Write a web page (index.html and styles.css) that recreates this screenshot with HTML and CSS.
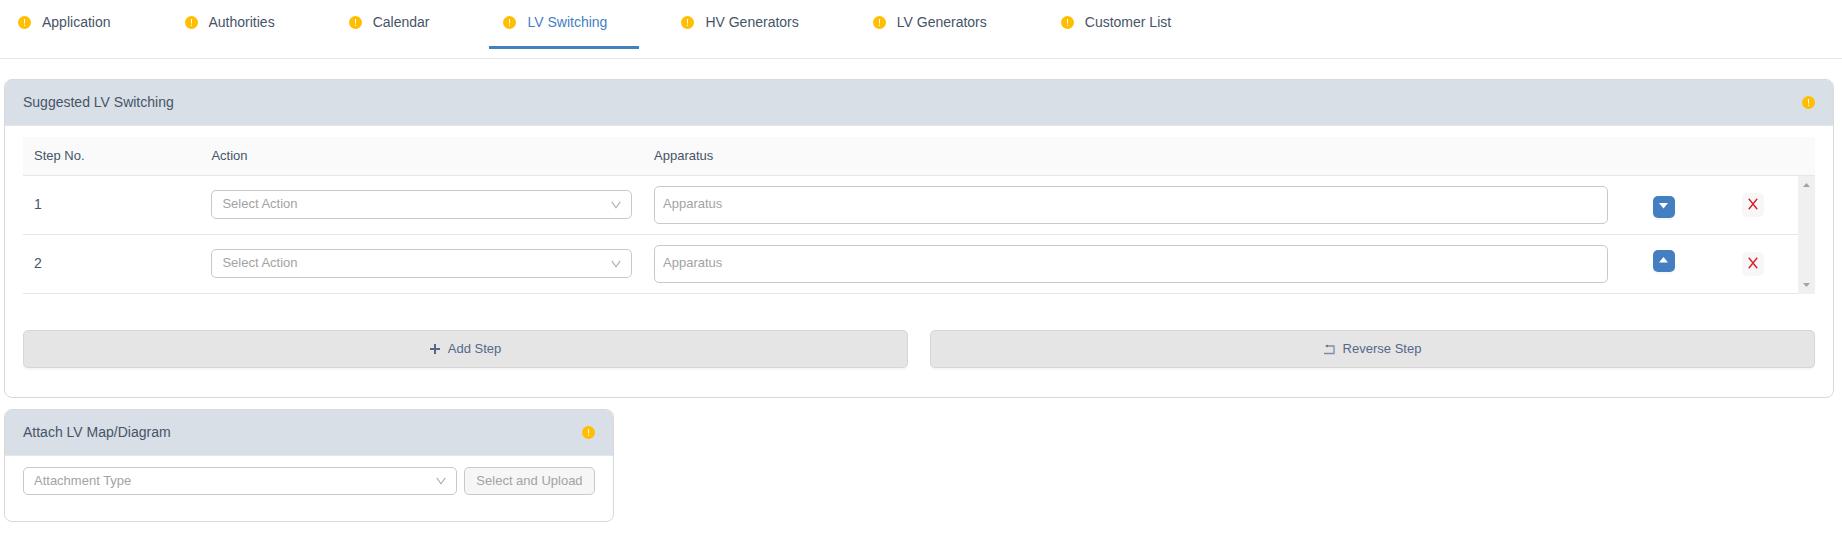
FILE: index.html
```html
<!DOCTYPE html>
<html lang="en">
<head>
<meta charset="utf-8">
<title>LV Switching</title>
<link rel="stylesheet" href="styles.css">
</head>
<body>
<svg class="defs" aria-hidden="true">
  <symbol id="warn" viewBox="0 0 13 13"><circle cx="6.5" cy="6.5" r="6.5" fill="#ffbf00"/><path d="M6 3h1v4.6H6zM6 8.7h1v1.3H6z" fill="#fff"/></symbol>
  <symbol id="chevron" viewBox="0 0 10 8"><path d="M.8.8 5 6.8 9.2.8" fill="none" stroke="#b0b0b0" stroke-width="1.2"/></symbol>
  <symbol id="cross" viewBox="0 0 10 12"><path d="M.8.8 9.2 11.2M9.2.8.8 11.2" fill="none" stroke="#d9202f" stroke-width="1.4"/></symbol>
</svg>
<nav class="tabs">
  <a class="tab" href="#"><svg class="warn"><use href="#warn"/></svg>Application</a>
  <a class="tab" href="#"><svg class="warn"><use href="#warn"/></svg>Authorities</a>
  <a class="tab" href="#"><svg class="warn"><use href="#warn"/></svg>Calendar</a>
  <a class="tab tab-active" href="#" aria-current="page"><svg class="warn"><use href="#warn"/></svg>LV Switching</a>
  <a class="tab" href="#"><svg class="warn"><use href="#warn"/></svg>HV Generators</a>
  <a class="tab" href="#"><svg class="warn"><use href="#warn"/></svg>LV Generators</a>
  <a class="tab" href="#"><svg class="warn"><use href="#warn"/></svg>Customer List</a>
</nav>
<main class="content">
  <section class="card">
    <header class="card-head"><h2 class="card-title">Suggested LV Switching</h2><svg class="warn"><use href="#warn"/></svg></header>
    <div class="card-body">
      <table class="steps">
        <colgroup><col class="col-step"><col class="col-action"><col><col class="col-button"><col class="col-button"><col class="col-scroll"></colgroup>
        <thead>
          <tr><th scope="col">Step No.</th><th scope="col">Action</th><th scope="col">Apparatus</th><th></th><th></th><th></th></tr>
        </thead>
        <tbody>
          <tr>
            <td class="step-no">1</td>
            <td><div class="select-box"><select class="select" aria-label="Action for step 1"><option>Select Action</option></select><svg class="chevron"><use href="#chevron"/></svg></div></td>
            <td><textarea class="textarea" rows="1" placeholder="Apparatus" aria-label="Apparatus for step 1"></textarea></td>
            <td class="center"><button class="move move-down" type="button" aria-label="Move step 1 down"><svg width="9" height="6" viewBox="0 0 9 6"><path d="M0 0h9L4.500 5.500z" fill="#fff"/></svg></button></td>
            <td class="center"><button class="remove" type="button" aria-label="Remove step 1"><svg width="10" height="12"><use href="#cross"/></svg></button></td>
            <td class="scroll-cell" rowspan="2"><div class="scrollbar"><svg width="7" height="4"><path d="M0 4h7L3.500 0z" fill="#a3a3a3"/></svg><svg width="7" height="4"><path d="M0 0h7L3.500 4z" fill="#a3a3a3"/></svg></div></td>
          </tr>
          <tr>
            <td class="step-no">2</td>
            <td><div class="select-box"><select class="select" aria-label="Action for step 2"><option>Select Action</option></select><svg class="chevron"><use href="#chevron"/></svg></div></td>
            <td><textarea class="textarea" rows="1" placeholder="Apparatus" aria-label="Apparatus for step 2"></textarea></td>
            <td class="center"><button class="move move-up" type="button" aria-label="Move step 2 up"><svg width="9" height="6" viewBox="0 0 9 6"><path d="M0 5.500h9L4.500 0z" fill="#fff"/></svg></button></td>
            <td class="center"><button class="remove" type="button" aria-label="Remove step 2"><svg width="10" height="12"><use href="#cross"/></svg></button></td>
          </tr>
        </tbody>
      </table>
      <div class="actions">
        <button class="wide-button" type="button"><svg width="10" height="10"><path d="M5 0v10M0 5h10" stroke="#56688a" stroke-width="2"/></svg>Add Step</button>
        <button class="wide-button" type="button"><svg width="11" height="11" viewBox="0 0 11 11"><path d="M2.500 2H10v7.500H0" fill="none" stroke="#7d8da6" stroke-width="1.300"/><path d="M3.600.4v3.200L1.200 2z" fill="#56688a"/></svg>Reverse Step</button>
      </div>
    </div>
  </section>
  <section class="card card-third">
    <header class="card-head"><h2 class="card-title">Attach LV Map/Diagram</h2><svg class="warn"><use href="#warn"/></svg></header>
    <div class="card-body upload">
      <div class="select-box upload-type"><select class="select" aria-label="Attachment Type"><option>Attachment Type</option></select><svg class="chevron"><use href="#chevron"/></svg></div>
      <button class="upload-button" type="button" disabled>Select and Upload</button>
    </div>
  </section>
</main>
</body>
</html>
```
FILE: styles.css
```css
* { box-sizing: border-box; }

body {
  margin: 0;
  background: #fff;
  color: #465468;
  font: 13px/20px "Liberation Sans", Arial, sans-serif;
}

button, select, textarea { font: inherit; }
svg { flex: none; }
.defs { display: none; }
.warn { width: 13px; height: 13px; }

.tabs {
  display: flex;
  gap: 28px;
  height: 59px;
  padding-left: 4px;
  border-bottom: 1px solid #e6e6e6;
}

.tab {
  display: flex;
  align-items: center;
  gap: 11px;
  height: 49px;
  padding: 0 32px 2px 14px;
  border-bottom: 3px solid transparent;
  color: #465468;
  font-size: 14px;
  text-decoration: none;
  white-space: nowrap;
}

.tab-active { border-color: #4480c1; color: #4480c1; }

.content {
  display: flex;
  flex-direction: column;
  gap: 11px;
  padding: 20px 8px 32px 4px;
}

.card { border: 1px solid #d9d9d9; border-radius: 8px; }
.card-third { width: 33.3333%; }

.card-head {
  display: flex;
  align-items: center;
  justify-content: space-between;
  height: 46px;
  padding: 0 18px 1px;
  border-bottom: 1px solid #e4e6e9;
  border-radius: 7px 7px 0 0;
  background: #d8dfe7;
}

.card-title { margin: 0; font-size: 14px; font-weight: 400; }
.card-body { padding: 11px 18px 29px; }

.steps { width: 100%; border-collapse: separate; border-spacing: 0; table-layout: fixed; }
.col-step { width: 9.9%; }
.col-action { width: 24.7%; }
.col-button { width: 5%; }
.col-scroll { width: 17px; }

.steps th {
  height: 39px;
  padding: 0 11px;
  border-bottom: 1px solid #e6e6e6;
  background: #fafafa;
  font-weight: 400;
  text-align: left;
}

.steps td {
  height: 59px;
  padding: 0 11px;
  border-bottom: 1px solid #e6e6e6;
}

.steps .step-no { padding-bottom: 2px; font-size: 14px; }
.steps .center { text-align: center; }
.steps .scroll-cell { height: 1px; padding: 0; border: 0; }

.scrollbar {
  display: flex;
  flex-direction: column;
  align-items: center;
  justify-content: space-between;
  height: 100%;
  padding: 7px 0;
  background: #f0f0f0;
}

.select-box { display: grid; align-items: center; }

.select {
  grid-area: 1 / 1;
  appearance: none;
  width: 100%;
  height: 29px;
  padding: 0 30px 2px 10px;
  border: 1px solid #c9c9c9;
  border-radius: 5px;
  background: #fff;
  color: #a3a3a3;
}

.steps .select-box { margin-bottom: 1px; }

.chevron {
  grid-area: 1 / 1;
  justify-self: end;
  width: 10px;
  height: 8px;
  margin-right: 11px;
  pointer-events: none;
}

.textarea {
  display: block;
  width: 100%;
  height: 38px;
  padding: 7px 8px;
  border: 1px solid #c9c9c9;
  border-radius: 5px;
  resize: none;
}

.textarea::placeholder { color: #a3a3a3; }

.move, .remove {
  display: inline-flex;
  align-items: center;
  justify-content: center;
  width: 22px;
  padding: 0 0 2px;
  border: 0;
  border-radius: 5px;
  vertical-align: middle;
}

.move { height: 22px; background: #4480c1; box-shadow: 0 2px 0 #f6f6f6; }
.move-down { margin-top: 4px; }
.move-up { margin-bottom: 7px; }
.remove { height: 24px; background: #f7f7f7; }

.actions { display: flex; gap: 22px; margin-top: 36px; }

.wide-button {
  display: flex;
  flex: 1;
  align-items: center;
  justify-content: center;
  gap: 8px;
  height: 38px;
  padding: 0;
  border: 1px solid #d6d6d6;
  border-radius: 5px;
  background: #e5e5e5;
  box-shadow: 0 2px 0 #f6f6f6;
  color: #56688a;
}

.upload { display: flex; gap: 7px; padding-bottom: 26px; }
.upload-type { flex: 1; }

.upload .select, .upload-button { height: 28px; padding-bottom: 0; }

.upload-button {
  width: 131px;
  padding: 0;
  border: 1px solid #c9c9c9;
  border-radius: 5px;
  background: #f6f6f6;
  color: #a3a3a3;
}
```
